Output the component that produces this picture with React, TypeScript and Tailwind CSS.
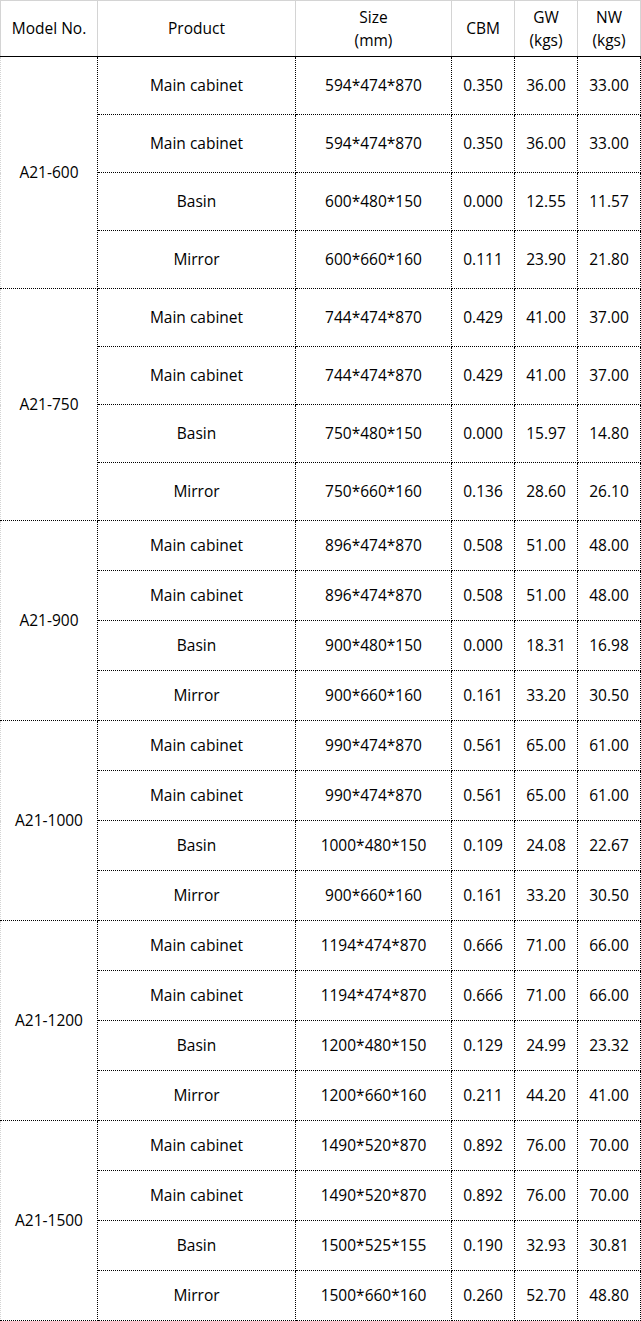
const groups = [
  {
    model: "A21-600",
    tall: true,
    rows: [
      ["Main cabinet", "594*474*870", "0.350", "36.00", "33.00"],
      ["Main cabinet", "594*474*870", "0.350", "36.00", "33.00"],
      ["Basin", "600*480*150", "0.000", "12.55", "11.57"],
      ["Mirror", "600*660*160", "0.111", "23.90", "21.80"],
    ],
  },
  {
    model: "A21-750",
    tall: true,
    rows: [
      ["Main cabinet", "744*474*870", "0.429", "41.00", "37.00"],
      ["Main cabinet", "744*474*870", "0.429", "41.00", "37.00"],
      ["Basin", "750*480*150", "0.000", "15.97", "14.80"],
      ["Mirror", "750*660*160", "0.136", "28.60", "26.10"],
    ],
  },
  {
    model: "A21-900",
    tall: false,
    rows: [
      ["Main cabinet", "896*474*870", "0.508", "51.00", "48.00"],
      ["Main cabinet", "896*474*870", "0.508", "51.00", "48.00"],
      ["Basin", "900*480*150", "0.000", "18.31", "16.98"],
      ["Mirror", "900*660*160", "0.161", "33.20", "30.50"],
    ],
  },
  {
    model: "A21-1000",
    tall: false,
    rows: [
      ["Main cabinet", "990*474*870", "0.561", "65.00", "61.00"],
      ["Main cabinet", "990*474*870", "0.561", "65.00", "61.00"],
      ["Basin", "1000*480*150", "0.109", "24.08", "22.67"],
      ["Mirror", "900*660*160", "0.161", "33.20", "30.50"],
    ],
  },
  {
    model: "A21-1200",
    tall: false,
    rows: [
      ["Main cabinet", "1194*474*870", "0.666", "71.00", "66.00"],
      ["Main cabinet", "1194*474*870", "0.666", "71.00", "66.00"],
      ["Basin", "1200*480*150", "0.129", "24.99", "23.32"],
      ["Mirror", "1200*660*160", "0.211", "44.20", "41.00"],
    ],
  },
  {
    model: "A21-1500",
    tall: false,
    rows: [
      ["Main cabinet", "1490*520*870", "0.892", "76.00", "70.00"],
      ["Main cabinet", "1490*520*870", "0.892", "76.00", "70.00"],
      ["Basin", "1500*525*155", "0.190", "32.93", "30.81"],
      ["Mirror", "1500*660*160", "0.260", "52.70", "48.80"],
    ],
  },
];

const th = "border border-[#d4d4d4] border-b-black border-b-dotted p-0 text-center align-middle font-normal";
const td = "border border-dotted border-black p-0 text-center align-middle";

export default function App() {
  return (
    <div className="bg-white w-[641px] text-[15.5px] leading-[23px] text-black" style={{ fontFamily: '"Open Sans", "Noto Sans", sans-serif' }}>
      <table className="w-[641px] table-fixed border-collapse">
        <colgroup>
          <col className="w-[97px]" />
          <col className="w-[198px]" />
          <col className="w-[156px]" />
          <col className="w-[63px]" />
          <col className="w-[63px]" />
          <col className="w-[63px]" />
        </colgroup>
        <thead>
          <tr className="h-[56px]">
            <th className={th}>Model No.</th>
            <th className={th}>Product</th>
            <th className={th}>
              Size
              <br />
              (mm)
            </th>
            <th className={th}>CBM</th>
            <th className={th}>
              GW
              <br />
              (kgs)
            </th>
            <th className={th}>
              NW
              <br />
              (kgs)
            </th>
          </tr>
        </thead>
        <tbody>
          {groups.map((g) =>
            g.rows.map((r, i) => (
              <tr key={g.model + i} className={g.tall ? "h-[58px]" : "h-[50px]"}>
                {i === 0 && (
                  <td rowSpan={4} className={td + " border-l-solid border-l-[#d4d4d4]"}>
                    {g.model}
                  </td>
                )}
                {r.map((c, j) => (
                  <td key={j} className={td}>
                    {c}
                  </td>
                ))}
              </tr>
            ))
          )}
        </tbody>
      </table>
    </div>
  );
}
